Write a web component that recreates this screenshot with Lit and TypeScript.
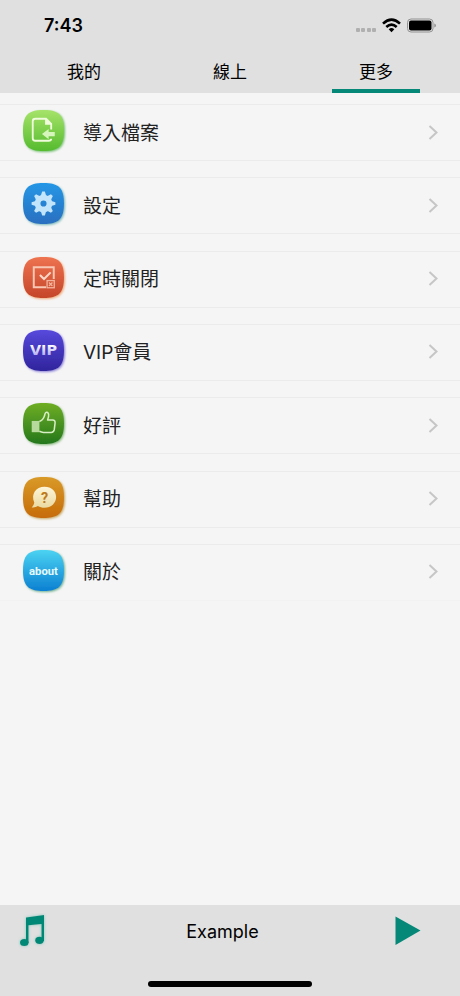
import { LitElement, html, css, svg } from "lit";
import { customElement, state } from "lit/decorators.js";

const squircle = "M20 0C35 0 40 5 40 20C40 35 35 40 20 40C5 40 0 35 0 20C0 5 5 0 20 0Z";

interface Item {
  id: string;
  label: string;
  from: string;
  to: string;
  glow: string;
  glyph: unknown;
}

const items: Item[] = [
  {
    id: "import", label: "導入檔案", from: "#a6e36a", to: "#55bb2e", glow: "#6fc06a",
    glyph: svg`
      <path d="M27.500 19V13.500L22.500 8.500H12Q9.500 8.500 9.500 11V27.500Q9.500 30 12 30H25Q27.500 30 27.500 28" fill="none" stroke="#effbdc" stroke-width="1.800"/>
      <path d="M21.500 8V14.500H28Z" fill="#effbdc"/>
      <path d="M18.500 23.500L25 18.500V21.500H31V25.500H25V28.500Z" fill="#d5f5bd"/>`,
  },
  {
    id: "settings", label: "設定", from: "#2497e6", to: "#2a6fc0", glow: "#79b8ba",
    glyph: svg`
      <g fill="#c3e5fb" transform="translate(20 20)">
        ${[0, 45, 90, 135, 180, 225, 270, 315].map(
          (a) => svg`<path d="M-2.800 -7L-1.300 -11.600H1.300L2.800 -7Z" transform="rotate(${a})"/>`
        )}
        <path fill-rule="evenodd" d="M0 -8.600A8.600 8.600 0 1 1 0 8.600A8.600 8.600 0 1 1 0 -8.600ZM0 -3A3 3 0 1 0 0 3A3 3 0 1 0 0 -3Z"/>
      </g>`,
  },
  {
    id: "timer", label: "定時關閉", from: "#ee7350", to: "#c4452a", glow: "#f0a878",
    glyph: svg`
      <path d="M22.500 29.500H10.500V10H30V21.500" fill="none" stroke="#f9c8b4" stroke-width="1.900"/>
      <path d="M16.500 17.500L20.500 21.500L27 15" fill="none" stroke="#fbd8c8" stroke-width="2"/>
      <rect x="23.500" y="23" width="7" height="7" fill="none" stroke="#f2b39c" stroke-width="1.300"/>
      <path d="M25.300 24.800L28.700 28.200M28.700 24.800L25.300 28.200" stroke="#f2b39c" stroke-width="1.300"/>`,
  },
  {
    id: "vip", label: "VIP會員", from: "#5749dc", to: "#30249c", glow: "#8a80d8",
    glyph: svg`<text class="vip" x="20" y="24" text-anchor="middle" fill="url(#vip-text)">VIP</text>`,
  },
  {
    id: "rate", label: "好評", from: "#6fae24", to: "#24771c", glow: "#83b878",
    glyph: svg`
      <rect x="8.500" y="17.500" width="7.500" height="11" fill="#b7d99b"/>
      <path d="M16 18Q19.500 17 21 12.500Q21.700 8.500 23.500 9Q26.300 10 24 16.500H29Q31.500 16.500 31.300 19.500L30.500 26Q30 28.700 27.500 28.700H20Q18 28.500 16 27.500" fill="none" stroke="#d7eec4" stroke-width="1.500" stroke-linejoin="round"/>`,
  },
  {
    id: "help", label: "幫助", from: "#d99a28", to: "#c66b08", glow: "#c8a860",
    glyph: svg`
      <path d="M21 9.500C28 9.500 32.300 14 32.300 19.500C32.300 25.500 27.500 30 21 30C18.500 30 16.500 29.500 14.500 28.300C13 29.300 10.500 30 8.500 29.500C10 28.300 10.800 26.500 11 24.800C7.500 17 12.500 9.500 21 9.500Z" fill="url(#bubble)"/>
      <text class="mark" x="21" y="25" text-anchor="middle" fill="#bd7a18">?</text>`,
  },
  {
    id: "about", label: "關於", from: "#4bd3f2", to: "#0b80d2", glow: "#70b290",
    glyph: svg`<text class="about" x="20" y="24" text-anchor="middle" fill="#e6faff">about</text>`,
  },
];

@customElement("app-root")
export class AppRoot extends LitElement {
  @state() private tab = 2;

  static styles = css`
    :host {
      display: flex;
      flex-direction: column;
      min-height: 100vh;
      background: #f5f5f5;
      color: #000;
      font-family: Inter, "Noto Sans CJK TC", sans-serif;
    }
    svg { display: block; }
    button {
      border: 0;
      padding: 0;
      background: none;
      color: inherit;
      font: inherit;
      cursor: pointer;
    }
    .top { background: #e0e0e0; }
    .status {
      display: flex;
      align-items: center;
      justify-content: space-between;
      height: 49px;
      padding: 2px 24px 0 44px;
      box-sizing: border-box;
    }
    .time { font-size: 18px; font-weight: 600; line-height: 24px; }
    .tabs {
      display: grid;
      grid-template-columns: repeat(3, 1fr);
      height: 44px;
      padding: 0 11px;
    }
    .tab {
      position: relative;
      padding-top: 2px;
      font-size: 17px;
      line-height: 42px;
    }
    .tab.on::after {
      content: "";
      position: absolute;
      bottom: 0;
      left: 20%;
      right: 20%;
      height: 4px;
      background: #058877;
    }
    .list {
      display: flex;
      flex-direction: column;
      justify-content: space-between;
      min-height: 497px;
      margin: 11px 0 0;
      padding: 0;
      list-style: none;
    }
    .row {
      display: flex;
      align-items: center;
      gap: 19px;
      width: 100%;
      min-height: 57px;
      box-sizing: border-box;
      padding: 0 20px 0 23px;
      border-top: 1px solid #ebebeb;
      border-bottom: 1px solid #ebebeb;
      color: #222;
      font-size: 19px;
      line-height: 28px;
      text-align: left;
    }
    li:last-child .row { border-bottom-color: #f2f2f2; }
    .icon { margin-bottom: 4px; overflow: visible; flex: none; }
    .label { flex: 1; padding-top: 2px; }
    .vip { font: bold 14px "DejaVu Sans", sans-serif; }
    .mark { font: bold 14px Roboto, sans-serif; }
    .about { font: bold 11px Roboto, sans-serif; }
    .player {
      margin-top: auto;
      background: #e0e0e0;
      padding-bottom: 9px;
    }
    .bar {
      display: grid;
      grid-template-columns: 70px 1fr 75px;
      align-items: center;
      height: 54px;
      padding: 0 10px 0 0;
    }
    .title { text-align: center; font-size: 18px; line-height: 24px; }
    .note { padding: 0 0 2px 18px; }
    .play { padding: 0 0 2px 19px; }
    .home {
      width: 164px;
      height: 6px;
      margin: 22px auto 0;
      border-radius: 3px;
      background: #000;
    }
  `;

  private icon(item: Item) {
    return html`<svg class="icon" width="41" height="41" viewBox="0 0 40 40" aria-hidden="true">
      <defs>
        <linearGradient id="bg-${item.id}" x1="0" y1="0" x2="0" y2="1">
          <stop offset="0" stop-color=${item.from} />
          <stop offset="1" stop-color=${item.to} />
        </linearGradient>
        <linearGradient id="vip-text" x1="0" y1="0" x2="0" y2="1">
          <stop offset="0.2" stop-color="#ffffff" />
          <stop offset="0.8" stop-color="#b9b4f2" />
        </linearGradient>
        <linearGradient id="bubble" x1="0" y1="0" x2="0" y2="1">
          <stop offset="0" stop-color="#fdf5d8" />
          <stop offset="1" stop-color="#ead9a0" />
        </linearGradient>
        <filter id="glow-${item.id}" x="-20%" y="-20%" width="140%" height="140%">
          <feDropShadow dx="1" dy="1" stdDeviation="1" flood-color=${item.glow} />
        </filter>
      </defs>
      <path d=${squircle} fill="url(#bg-${item.id})" filter="url(#glow-${item.id})" />
      ${item.glyph}
    </svg>`;
  }

  render() {
    return html`
      <header class="top">
        <div class="status">
          <span class="time">7:43</span>
          <svg width="82" height="20" viewBox="0 0 82 20" aria-hidden="true">
            <g fill="#b0b0b0">
              <rect x="2" y="12" width="4" height="4" rx="1" />
              <rect x="7" y="12" width="4" height="4" rx="1" />
              <rect x="13" y="12" width="4" height="4" rx="1" />
              <rect x="18" y="12" width="4" height="4" rx="1" />
            </g>
            <g fill="none" stroke="#000" stroke-width="2.6">
              <path d="M29 7.600Q37.500 -0.500 46 7.600" />
              <path d="M32.300 11Q37.500 6.200 42.700 11" />
            </g>
            <path d="M34.700 13.200Q37.500 11 40.300 13.200L37.500 16.200Z" />
            <rect x="53.500" y="3" width="25.500" height="13" rx="3.500" fill="none" stroke="#929292" />
            <rect x="55" y="4.500" width="22.500" height="10" rx="2" />
            <path d="M80.300 7.500Q82 8 82 9.500Q82 11 80.300 11.500Z" fill="#929292" />
          </svg>
        </div>
        <nav class="tabs">
          ${["我的", "線上", "更多"].map(
            (t, i) => html`<button class="tab ${i === this.tab ? "on" : ""}" @click=${() => (this.tab = i)}>${t}</button>`
          )}
        </nav>
      </header>
      <ul class="list">
        ${items.map(
          (item) => html`<li>
            <button class="row">
              ${this.icon(item)}
              <span class="label">${item.label}</span>
              <svg width="14" height="16" viewBox="0 0 14 16" aria-hidden="true">
                <path d="M3.500 1L10.500 7.500L3.500 14" fill="none" stroke="#c6c6c6" stroke-width="2" />
              </svg>
            </button>
          </li>`
        )}
      </ul>
      <footer class="player">
        <div class="bar">
          <button class="note" aria-label="Playlist">
            <svg width="32" height="36" viewBox="0 0 32 36">
              <defs>
                <filter id="note-glow" x="-30%" y="-30%" width="160%" height="160%">
                  <feDropShadow dx="0" dy="0" stdDeviation="1.5" flood-color="#55bfae" flood-opacity="0.7" />
                </filter>
              </defs>
              <g fill="#058877" filter="url(#note-glow)">
                <path d="M8 4.500L26 2V28H23.500V11L10.500 12.300V30H8Z" />
                <ellipse cx="6.300" cy="29.500" rx="4.300" ry="3.600" />
                <ellipse cx="21.500" cy="27.300" rx="4.300" ry="3.600" />
              </g>
            </svg>
          </button>
          <span class="title">Example</span>
          <button class="play" aria-label="Play">
            <svg width="32" height="32" viewBox="0 0 32 32">
              <path d="M1.500 1.500L26.500 15.500L1.500 30Z" fill="#058877" />
            </svg>
          </button>
        </div>
        <div class="home"></div>
      </footer>
    `;
  }
}
